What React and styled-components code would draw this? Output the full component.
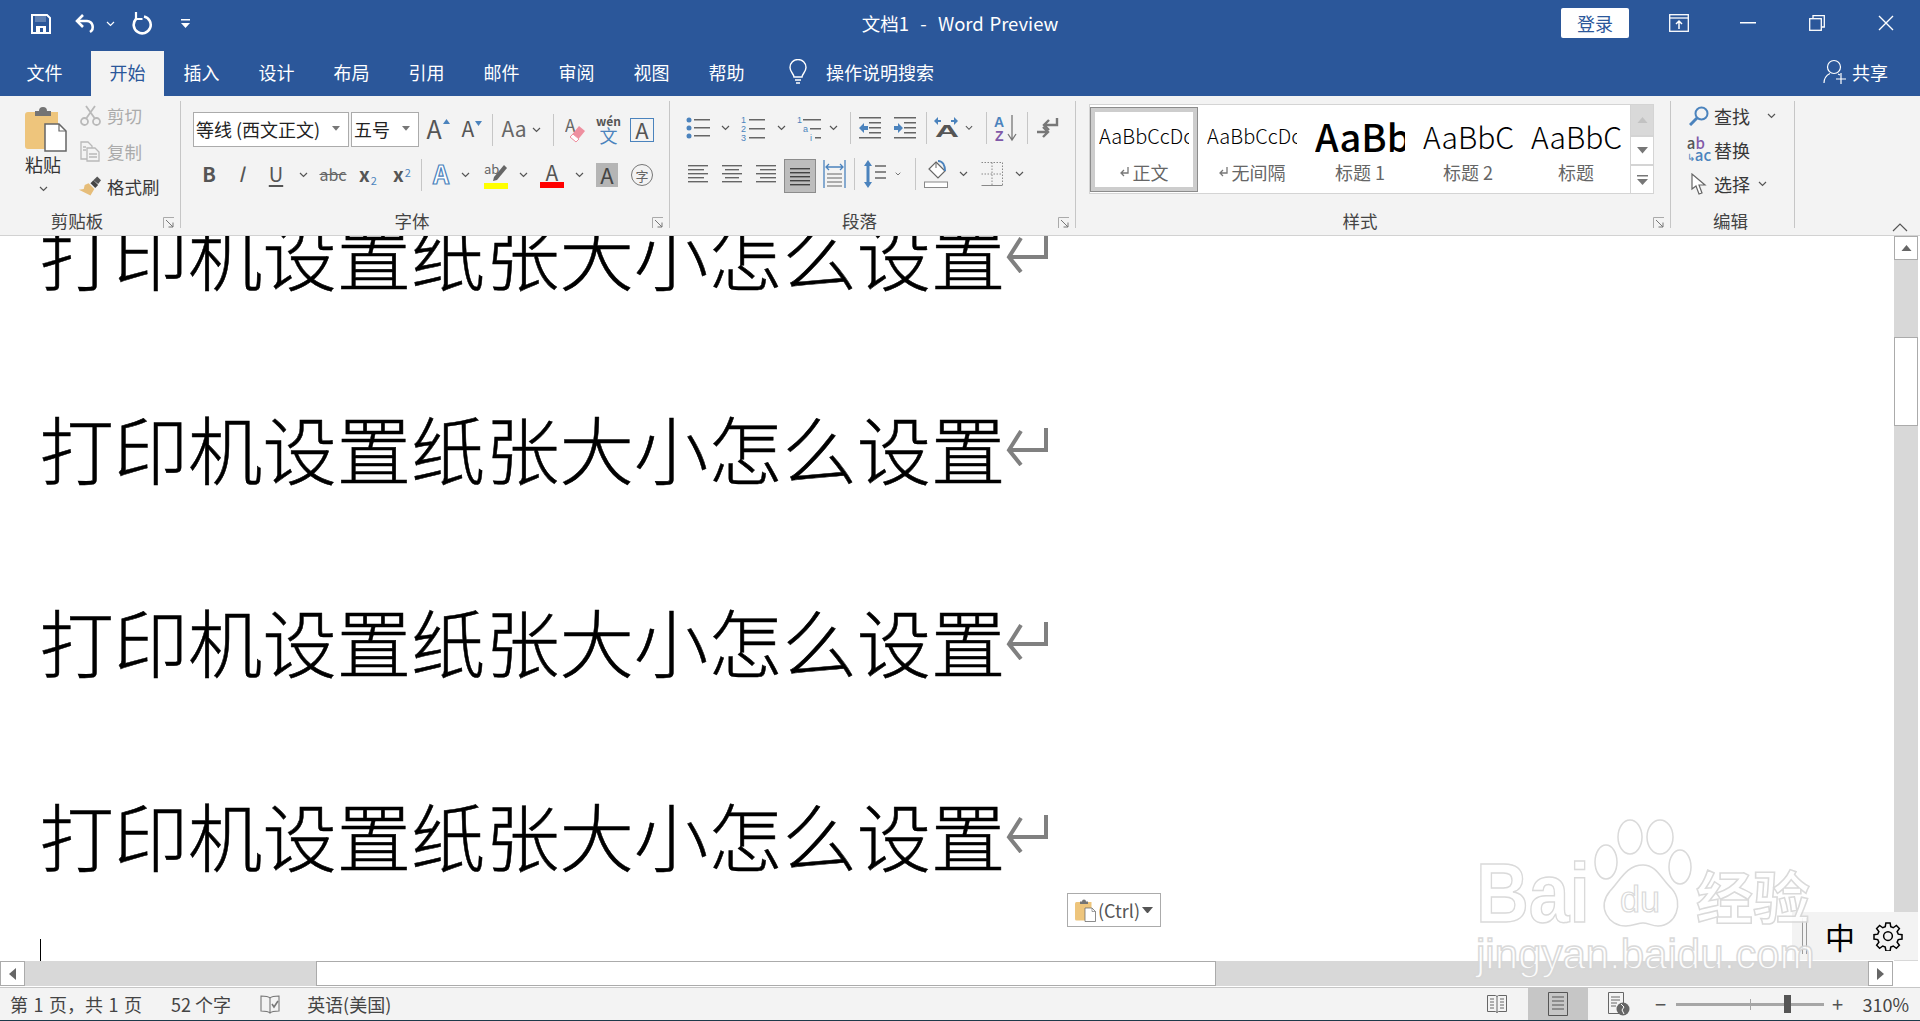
import React from 'react';
import styled, {createGlobalStyle} from 'styled-components';

const GlobalStyle = createGlobalStyle`
    html, body {
        margin: 0;
        padding: 0;
        background: #fff;
        font-family: "Noto Sans CJK SC", "Noto Sans", sans-serif;
    }
`;

const Window = styled.div`
    position: relative;
    display: flex;
    flex-direction: column;
    width: 1920px;
    height: 1021px;
    overflow: hidden;
    border-bottom: 1px solid #1d3a4a;
    box-sizing: border-box;
`;

/* ---------- title bar and tabs ---------- */

const TitleBar = styled.div`
    display: grid;
    grid-template-columns: 1fr auto 1fr;
    align-items: start;
    height: 51px;
    flex: none;
    background: #2b579a;
    color: #fff;
`;

const Qat = styled.div`
    display: flex;
    align-items: center;
    height: 48px;
`;

const Title = styled.div`
    font-size: 18.5px;
    line-height: 46px;
    word-spacing: 1.5px;
    white-space: pre;
`;

const WindowControls = styled.div`
    display: flex;
    justify-content: flex-end;
    align-items: center;
    height: 46px;
`;

const Login = styled.div`
    display: flex;
    align-items: center;
    justify-content: center;
    width: 68px;
    height: 30px;
    margin-right: 15px;
    background: #fff;
    border-radius: 2px;
    color: #2b579a;
    font-size: 18px;
`;

const WinButton = styled.div`
    display: flex;
    align-items: center;
    justify-content: center;
    width: 69px;
    height: 46px;
`;

const TabBar = styled.div`
    display: flex;
    align-items: stretch;
    height: 45px;
    flex: none;
    background: #2b579a;
    color: #fff;
    font-size: 18px;
`;

const Tab = styled.div`
    display: flex;
    align-items: center;
    justify-content: center;
    width: ${p => p.$w || 75}px;
    flex: none;
    padding-bottom: 3px;
    box-sizing: border-box;
    background: ${p => p.$active ? '#f3f3f3' : 'transparent'};
    color: ${p => p.$active ? '#2b579a' : '#fff'};
`;

const TellMe = styled.div`
    display: flex;
    align-items: center;
    gap: 18px;
    margin-left: 24px;
    padding-bottom: 3px;
`;

const Share = styled.div`
    display: flex;
    align-items: center;
    gap: 5px;
    margin-left: auto;
    padding-right: 32px;
    padding-bottom: 3px;
`;

/* ---------- ribbon ---------- */

const Ribbon = styled.div`
    display: flex;
    height: 140px;
    flex: none;
    box-sizing: border-box;
    padding-top: 5px;
    background: #f3f3f3;
    border-bottom: 1px solid #d2d2d2;
    color: #444;
`;

const Group = styled.div`
    display: flex;
    flex-direction: column;
    width: ${p => p.$w}px;
    height: 127px;
    flex: none;
    box-sizing: content-box;
    border-right: 1px solid #c6c6c6;
`;

const GroupBody = styled.div`
    flex: 1;
    min-height: 0;
    padding-left: ${p => p.$pl || 0}px;
    padding-top: ${p => p.$pt || 0}px;
`;

const GroupFoot = styled.div`
    display: flex;
    align-items: center;
    height: 18px;
    margin-bottom: -2px;
    font-size: 17.5px;
    color: #444;
`;

const GroupLabel = styled.div`
    flex: 1;
    text-align: center;
    padding-right: 4px;
    line-height: 18px;
`;

const Launcher = styled.div`
    display: flex;
    justify-content: center;
    width: 22px;
    padding-top: 3px;
    flex: none;
`;

const ClipboardBody = styled.div`
    display: flex;
    flex: 1;
    min-height: 0;
`;

const PasteColumn = styled.div`
    display: flex;
    flex-direction: column;
    align-items: center;
    width: 70px;
    margin-left: 8px;
    padding-top: 5px;
    font-size: 18px;
    color: #333;
    line-height: 24px;
`;

const PasteArt = styled.span`
    display: flex;
    margin-left: 5px;
`;

const PasteChevron = styled.span`
    display: flex;
    margin-top: 10px;
`;

const SmallList = styled.div`
    display: flex;
    flex-direction: column;
    gap: 3.5px;
`;

const SmallRow = styled.div`
    display: flex;
    align-items: center;
    gap: 5px;
    height: 32px;
    padding-bottom: 3px;
    box-sizing: border-box;
    font-size: 17.5px;
    color: ${p => p.$off ? '#ababab' : '#383838'};
`;

const IconBox = styled.span`
    display: flex;
    justify-content: center;
    align-items: center;
    width: ${p => p.$w || 24}px;
    flex: none;
`;

const Row = styled.div`
    display: flex;
    align-items: center;
    height: ${p => p.$h || 34}px;
    margin-bottom: ${p => p.$mb || 0}px;
`;

const Slot = styled.span`
    display: flex;
    justify-content: center;
    align-items: center;
    width: ${p => p.$w}px;
    margin-left: ${p => p.$ml || 0}px;
    height: 100%;
    flex: none;
`;

const Sep = styled.span`
    width: 1px;
    height: 32px;
    flex: none;
    margin-left: ${p => p.$ml || 0}px;
    background: #c6c6c6;
`;

const Combo = styled.div`
    display: flex;
    align-items: center;
    justify-content: space-between;
    width: ${p => p.$w}px;
    margin-right: ${p => p.$mr || 0}px;
    height: 35px;
    flex: none;
    box-sizing: border-box;
    padding: 0 8px 2px 2px;
    background: #fff;
    border: 1px solid #ababab;
    font-size: 18px;
    color: #222;
    white-space: nowrap;
`;

const Letter = styled.span`
    font-size: ${p => p.$s || 20}px;
    font-weight: ${p => p.$b ? 700 : 400};
    font-style: ${p => p.$i ? 'italic' : 'normal'};
    color: ${p => p.$c || '#555'};
    line-height: 1;
    margin-top: -3px;
    text-decoration: ${p => p.$u ? 'underline' : p.$strike ? 'line-through' : 'none'};
    text-underline-offset: 3px;
`;

const LetterSup = styled.span`
    display: inline-flex;
    align-items: ${p => p.$sub ? 'flex-end' : 'flex-start'};
    gap: 1px;
`;

const Tiny = styled.span`
    font-size: 11px;
    line-height: 1;
    color: #4b83bd;
    margin-bottom: ${p => p.$sub ? '-3px' : '0'};
`;

const OutlineLetter = styled.span`
    font-size: 25px;
    font-weight: 700;
    line-height: 1;
    margin-top: -3px;
    color: #fff;
    -webkit-text-stroke: 1.2px #4b83bd;
`;

const BoxLetter = styled.span`
    display: flex;
    align-items: center;
    justify-content: center;
    width: 24px;
    height: 24px;
    padding-bottom: 2px;
    box-sizing: border-box;
    border: 1px solid #4b83bd;
    font-size: 22px;
    line-height: 1;
    color: #555;
`;

const ShadedLetter = styled.span`
    display: flex;
    align-items: center;
    justify-content: center;
    width: 22px;
    height: 24px;
    padding-bottom: 2px;
    box-sizing: border-box;
    background: #b5b5b5;
    font-size: 22px;
    line-height: 1;
    color: #444;
`;

const CircleChar = styled.span`
    display: flex;
    align-items: center;
    justify-content: center;
    width: 22px;
    height: 22px;
    box-sizing: border-box;
    border: 1px solid #777;
    border-radius: 50%;
    font-size: 13px;
    color: #666;
`;

const BarLetter = styled.span`
    display: flex;
    flex-direction: column;
    align-items: center;
    width: 24px;
    line-height: 1;
    font-size: 21px;
    color: #555;

    &::after {
        content: '';
        width: 100%;
        height: 6px;
        margin-top: -1px;
        background: ${p => p.$bar};
    }
`;

const WenStack = styled.span`
    display: flex;
    flex-direction: column;
    align-items: center;
    line-height: 1;
`;

const WenTop = styled.span`
    font-size: 12px;
    font-weight: 700;
    color: #555;
    line-height: 11px;
`;

const WenBottom = styled.span`
    font-size: 18px;
    color: #4b83bd;
    line-height: 18px;
`;

const ActiveBox = styled.span`
    display: flex;
    justify-content: center;
    width: 32px;
    height: 34px;
    margin-left: 2px;
    margin-top: 4px;
    padding-top: 6px;
    flex: none;
    box-sizing: border-box;
    background: #bdbdbd;
    border: 1px solid #8c8c8c;
`;

/* styles gallery */

const Gallery = styled.div`
    display: flex;
    width: 565px;
    height: 90px;
    margin-left: 13px;
    margin-top: 3px;
`;

const StyleList = styled.div`
    display: flex;
    width: 542px;
    height: 90px;
    flex: none;
    box-sizing: border-box;
    border: 1px solid #d4d4d4;
    background: #fff;
    padding: 2px 0 1px;
`;

const StyleItem = styled.div`
    display: flex;
    flex-direction: column;
    align-items: center;
    width: 108px;
    flex: none;
    box-sizing: border-box;
    padding-top: ${p => p.$sel ? '0' : '5px'};
    border: ${p => p.$sel ? '5px solid #cdcdcd' : 'none'};
    outline: ${p => p.$sel ? '1px solid #8c8c8c' : 'none'};
    outline-offset: -1px;
`;

const StyleSample = styled.div`
    display: flex;
    align-items: center;
    width: 90px;
    height: 48px;
    flex: none;
    overflow: hidden;
    white-space: nowrap;
    font-size: ${p => p.$s}px;
    font-weight: ${p => p.$b ? 500 : 300};
    color: #000;
    line-height: 1;
`;

const StyleLabel = styled.div`
    display: flex;
    align-items: center;
    gap: 4px;
    height: 24px;
    font-size: 18px;
    color: #666;
`;

const GalleryArrows = styled.div`
    display: flex;
    flex-direction: column;
    width: 23px;
    flex: none;
`;

const GalleryArrow = styled.div`
    display: flex;
    align-items: center;
    justify-content: center;
    height: ${p => p.$h}px;
    box-sizing: border-box;
    background: ${p => p.$off ? '#d9d9d9' : '#fff'};
    border: 1px solid #d4d4d4;
    border-left: none;
`;

const EditList = styled.div`
    display: flex;
    flex-direction: column;
    gap: 4px;
    padding-left: 14px;
`;

const EditRow = styled.div`
    display: flex;
    align-items: center;
    height: 30px;
    gap: 1px;
    font-size: 18px;
    color: #383838;
`;

const EditChevron = styled.span`
    display: flex;
    margin-left: ${p => p.$ml}px;
`;

const ReplaceMark = styled.span`
    display: flex;
    flex-direction: column;
    font-size: 15px;
    line-height: 12px;
    font-weight: 500;
    color: #555;
`;

const ReplaceCell = styled.span`
    color: ${p => p.$c};
    font-size: ${p => p.$s || 15}px;
`;

const RibbonEnd = styled.div`
    display: flex;
    flex: 1;
    align-items: flex-end;
    justify-content: flex-end;
    padding: 0 12px 3px 0;
`;

/* ---------- document ---------- */

const DocArea = styled.div`
    display: grid;
    grid-template-columns: 1fr 26px;
    grid-template-rows: 1fr;
    flex: 1;
    min-height: 0;
`;

const Paper = styled.div`
    overflow: hidden;
    background: #fff;
`;

const PaperScroll = styled.div`
    margin-top: -80px;
`;

const Line = styled.div`
    display: flex;
    align-items: center;
    height: 193.5px;
    padding-left: 39.5px;
    font-size: 74.3px;
    font-weight: 300;
    -webkit-text-stroke: 0.5px #000;
    color: #000;
    white-space: nowrap;
`;

const ReturnMark = styled.svg`
    margin-left: 0.5px;
    margin-top: 2px;
`;

const Caret = styled.div`
    width: 1px;
    height: 30px;
    margin: 9px 0 0 40px;
    background: #000;
`;

const VScroll = styled.div`
    display: flex;
    flex-direction: column;
    width: 24px;
    background: #d8d8d8;
`;

const ScrollButton = styled.div`
    display: flex;
    align-items: center;
    justify-content: center;
    width: ${p => p.$w || 24}px;
    height: ${p => p.$h || 24}px;
    flex: none;
    box-sizing: border-box;
    background: #fff;
    border: 1px solid #ababab;
`;

const VThumb = styled.div`
    height: 89px;
    margin-top: 77px;
    background: #fff;
    border: 1px solid #ababab;
    box-sizing: border-box;
`;

const HScrollRow = styled.div`
    display: flex;
    height: 26px;
    flex: none;
    background: #fff;
`;

const HTrack = styled.div`
    display: flex;
    width: 1893px;
    height: 25px;
    background: #d8d8d8;
`;

const HThumb = styled.div`
    width: 900px;
    margin-left: 291px;
    background: #fff;
    border: 1px solid #ababab;
    box-sizing: border-box;
`;

const HEnd = styled.div`
    margin-left: auto;
`;

/* ---------- status bar ---------- */

const StatusBar = styled.div`
    display: flex;
    align-items: center;
    height: 33px;
    flex: none;
    box-sizing: border-box;
    background: #f3f3f3;
    border-top: 1px solid #c6c6c6;
    font-size: 18px;
    color: #444;
    white-space: pre;
`;

const StatusItem = styled.span`
    margin-left: ${p => p.$ml}px;
    display: flex;
    align-items: center;
    word-spacing: ${p => p.$ws || 0}px;
`;

const StatusRight = styled.div`
    display: flex;
    align-items: center;
    align-self: stretch;
    margin-left: auto;
    padding-right: 11px;
`;

const ViewButton = styled.span`
    display: flex;
    align-items: center;
    justify-content: center;
    width: ${p => p.$w}px;
    margin-left: ${p => p.$ml || 0}px;
    align-self: stretch;
    background: ${p => p.$active ? '#c6c6c6' : 'transparent'};
`;

const ZoomSlider = styled.div`
    position: relative;
    width: 148px;
    height: 3px;
    margin-left: 9px;
    background: #a6a6a6;
`;

const ZoomTick = styled.span`
    position: absolute;
    left: 74px;
    top: -4px;
    width: 1px;
    height: 11px;
    background: #a6a6a6;
`;

const ZoomThumb = styled.span`
    position: absolute;
    left: 108px;
    top: -8px;
    width: 7px;
    height: 18px;
    background: #555;
`;

const ZoomSign = styled.span`
    display: flex;
    justify-content: center;
    width: 14px;
    margin-left: ${p => p.$ml}px;
    font-size: 20px;
    line-height: 1;
    color: #555;
`;

const ZoomValue = styled.span`
    margin-left: 18px;
`;

/* ---------- things over the page ---------- */

const PasteTag = styled.div`
    position: absolute;
    left: 1067px;
    top: 893px;
    display: flex;
    align-items: center;
    gap: 2px;
    width: 94px;
    height: 34px;
    padding-left: 7px;
    box-sizing: border-box;
    background: #fff;
    border: 1px solid #ababab;
    font-size: 18px;
    color: #555;
`;

const Ime = styled.div`
    position: absolute;
    left: 1792px;
    top: 912px;
    display: flex;
    align-items: center;
    width: 126px;
    height: 48px;
    background: #f3f3f3;
    font-size: 30px;
    color: #000;
`;

const ImeGrip = styled.span`
    width: 3px;
    height: 36px;
    margin: 0 18px 0 10px;
    border-left: 1px solid #999;
    border-right: 1px solid #999;
`;

const ImeGear = styled.span`
    display: flex;
    margin-left: 18px;
`;

const Watermark = styled.div`
    position: absolute;
    left: 1476px;
    top: 817px;
    width: 345px;
    pointer-events: none;
    color: #fff;
    -webkit-text-stroke: 1.5px #d6d6d6;
    opacity: 0.9;
`;

const MarkTop = styled.div`
    display: flex;
    align-items: flex-end;
    height: 110px;
`;

const MarkBai = styled.span`
    font-family: "Liberation Sans", sans-serif;
    font-size: 84px;
    font-weight: 700;
    line-height: 68px;
    width: 118px;
    flex: none;
    transform: scaleX(0.87);
    transform-origin: left center;
`;

const MarkJing = styled.span`
    font-size: 57px;
    font-weight: 700;
    line-height: 66px;
    white-space: nowrap;
    margin-left: 4px;
`;

const MarkUrl = styled.div`
    font-family: "Liberation Sans", sans-serif;
    font-size: 42px;
    line-height: 48px;
    margin-top: 4px;
    white-space: nowrap;
`;

/* ---------- icons ---------- */

const Chev = ({c = '#555'}) => (
    <svg width="9" height="6" viewBox="0 0 9 6"><path d="M1 1l3.500 3.500L8 1" fill="none" stroke={c} strokeWidth="1.200" /></svg>
);

const Tri = ({down, c = '#777', w = 11}) => (
    <svg width={w} height={w * 0.6} viewBox="0 0 11 6.600"><path d={down ? 'M0 0h11L5.500 6.600z' : 'M0 6.600h11L5.500 0z'} fill={c} /></svg>
);

const Corner = () => (
    <svg width="12" height="12" viewBox="0 0 12 12" fill="none" stroke="#777"><path d="M.5 11V.5H11" stroke="#aaa" /><path d="M3 3l7 7M10 5.500V10H5.500" /></svg>
);

const Lines = ({rows, w = 24, h = 22, c = '#666'}) => (
    <svg width={w} height={h} viewBox={`0 0 ${w} ${h}`}>
        {rows.map(([x1, x2, y], i) => <rect key={i} x={x1} y={y} width={x2 - x1} height="1.400" fill={c} />)}
    </svg>
);

const Save = () => (
    <svg width="20" height="20" viewBox="0 0 20 20"><path d="M1 1h15l3 3v15H1z" fill="none" stroke="#fff" strokeWidth="2" /><path d="M5 12h10v7H5z" fill="#fff" /><path d="M9 14h3v4H9z" fill="#2b579a" /><path d="M4 2h11v6H4z" fill="#fff" opacity=".25" /></svg>
);

const Undo = () => (
    <svg width="22" height="22" viewBox="0 0 22 22" fill="none" stroke="#fff" strokeWidth="2.600"><path d="M9 2L3 8l6 6" /><path d="M3 8h10a6 6 0 0 1 3 11" /></svg>
);

const Redo = () => (
    <svg width="22" height="24" viewBox="0 0 22 24" fill="none" stroke="#fff" strokeWidth="2.600"><path d="M13 4.500a8.500 8.500 0 1 1-8 2.500" /><path d="M5 0v7h6.500" strokeWidth="2.200" /></svg>
);

const QatMore = () => (
    <svg width="9" height="10" viewBox="0 0 9 10"><rect width="9" height="1.500" fill="#fff" /><path d="M0 4h9L4.500 9z" fill="#fff" /></svg>
);

const Bulb = () => (
    <svg width="20" height="26" viewBox="0 0 20 26" fill="none" stroke="#fff" strokeWidth="1.400"><path d="M6 18c0-3-4-5-4-9.500a8 8 0 0 1 16 0C18 13 14 15 14 18z" /><path d="M7 21h6M8 24h4" /></svg>
);

const ShareIcon = () => (
    <svg width="24" height="26" viewBox="0 0 24 26" fill="none" stroke="#fff" strokeWidth="1.200"><circle cx="11" cy="8" r="6.500" /><path d="M1 24c0-5 3-8 6-9.500M15 15l2 1M18 14v11M13 20h10" /></svg>
);

const RibbonMode = () => (
    <svg width="20" height="18" viewBox="0 0 20 18" fill="none" stroke="#fff" strokeWidth="1.300"><rect x=".7" y=".7" width="18.600" height="16.600" /><path d="M1 4h18" /><path d="M10 15V7M7 10l3-3 3 3" strokeWidth="1.500" /></svg>
);

const Restore = () => (
    <svg width="16" height="16" viewBox="0 0 16 16" fill="none" stroke="#fff" strokeWidth="1.300"><rect x=".7" y="3.700" width="11.600" height="11.600" /><path d="M4 3V.7h11.300V12H13" /></svg>
);

const Close = () => (
    <svg width="16" height="16" viewBox="0 0 16 16" stroke="#fff" strokeWidth="1.400"><path d="M1 1l14 14M15 1L1 15" /></svg>
);

const PasteIcon = ({s = 1}) => (
    <svg width={42 * s} height={46 * s} viewBox="0 0 42 46">
        <path d="M3 6h30v37H3a3 3 0 0 1-3-3V9a3 3 0 0 1 3-3z" fill="#eec57c" />
        <path d="M10 5h4a4 4 0 0 1 8 0h4v5H10z" fill="#747474" />
        <path d="M20 18h14l7 7v20H20z" fill="#fff" stroke="#666" strokeWidth="1.500" />
        <path d="M34 18v7h7" fill="none" stroke="#666" strokeWidth="1.200" />
    </svg>
);

const Scissors = () => (
    <svg width="21" height="21" viewBox="0 0 21 21" fill="none" stroke="#b9b9b9" strokeWidth="1.800"><circle cx="4.500" cy="16.500" r="3.500" /><circle cx="16.500" cy="16.500" r="3.500" /><path d="M6.500 13L15 1M14.500 13L6 1" /></svg>
);

const CopyIcon = () => (
    <svg width="20" height="21" viewBox="0 0 20 21" fill="#f3f3f3" stroke="#b9b9b9" strokeWidth="1.300"><path d="M1 1h7l4 4v13H1z" /><path d="M7 7h8l4 4v9H7z" /><path d="M9 13h8M9 16h8M3 6h3M3 9h3" /></svg>
);

const Brush = () => (
    <svg width="25" height="21" viewBox="0 0 25 21"><path d="M11 7l6 6-4 7-12-6 5-1 1-4z" fill="#e6bd79" /><path d="M16 4l5 5-3 3-5-5z" fill="#444" /><path d="M20 0l4 4-3 4-5-4z" fill="#555" /></svg>
);

const GrowA = ({s, down}) => (
    <LetterSup>
        <Letter $s={s} $c="#555">A</Letter>
        <svg width="7" height="5" viewBox="0 0 7 5"><path d={down ? 'M0 0h7L3.500 5z' : 'M0 5h7L3.500 0z'} fill="#4b83bd" /></svg>
    </LetterSup>
);

const ClearFormat = () => (
    <svg width="22" height="26" viewBox="0 0 22 26">
        <text x="0" y="15" fontSize="17" fill="#666" fontFamily="Noto Sans CJK SC">A</text>
        <path d="M14 9l6 5-9 11-6-5z" fill="#ee8f9f" />
        <path d="M8 17l6 5-3 3-6-5z" fill="#fff" stroke="#ee8f9f" />
    </svg>
);

const Highlight = () => (
    <svg width="24" height="27" viewBox="0 0 24 27">
        <text x="0" y="12" fontSize="13" fill="#666" fontFamily="Noto Sans CJK SC">ab</text>
        <path d="M20 3l3 3-10 12-4 1 1-4z" fill="#666" />
        <rect y="21" width="24" height="6" fill="#ffff00" />
    </svg>
);

const Bullets = () => (
    <svg width="24" height="24" viewBox="0 0 24 24">
        {[4, 12, 20].map(y => <g key={y}><circle cx="3" cy={y} r="2.500" fill="#4b83bd" /><rect x="8" y={y - 1} width="16" height="1.500" fill="#666" /></g>)}
    </svg>
);

const Numbered = () => (
    <svg width="24" height="26" viewBox="0 0 24 26">
        {['1', '2', '3'].map((n, i) => <g key={n}><text x="0" y={8 + i * 9} fontSize="9" fill="#4b83bd" fontFamily="Liberation Sans">{n}</text><rect x="8" y={4 + i * 9} width="16" height="1.500" fill="#666" /></g>)}
    </svg>
);

const MultiLevel = () => (
    <svg width="24" height="26" viewBox="0 0 24 26">
        <text x="0" y="8" fontSize="9" fill="#4b83bd" fontFamily="Liberation Sans">1</text>
        <text x="6" y="17" fontSize="9" fill="#4b83bd" fontFamily="Liberation Sans">a</text>
        <text x="13" y="26" fontSize="9" fill="#4b83bd" fontFamily="Liberation Sans">i</text>
        <path d="M6 4h18v1.500H6zM13 13h11v1.500H13zM18 22h6v1.500h-6z" fill="#666" />
    </svg>
);

const Indent = ({out}) => (
    <svg width="24" height="24" viewBox="0 0 24 24">
        <path d="M1 1h22v1.500H1zM11 6h12v1.500H11zM11 11h12v1.500H11zM11 16h12v1.500H11zM1 21h22v1.500H1z" fill="#666" />
        <path d={out ? 'M1 12l5-5v3h4v4H6v3z' : 'M10 12L5 7v3H1v4h4v3z'} fill="#4b83bd" />
    </svg>
);

const TextDir = () => (
    <svg width="26" height="24" viewBox="0 0 26 24">
        <text x="1" y="21" fontSize="17" fontWeight="700" fill="#555" fontFamily="Liberation Sans" transform="scale(1.950 1)">A</text>
        <path d="M1 5l4-4v3h3v2H5v3zM25 5l-4-4v3h-3v2h3v3z" fill="#4b83bd" />
    </svg>
);

const Sort = () => (
    <svg width="26" height="28" viewBox="0 0 26 28">
        <text x="0" y="13" fontSize="14" fontWeight="700" fill="#4b83bd" fontFamily="Liberation Sans">A</text>
        <text x="1" y="27" fontSize="14" fontWeight="700" fill="#8059a8" fontFamily="Liberation Sans">Z</text>
        <path d="M18 1v24M14 20l4 6 4-6" fill="none" stroke="#777" strokeWidth="1.300" />
    </svg>
);

const Ltr = () => (
    <svg width="22" height="22" viewBox="0 0 22 22" fill="none" stroke="#777" strokeWidth="2.400"><path d="M20 1v7H8M12 3L7 8l5 5" /><path d="M0 15h10M6 10l5 5-5 5" /></svg>
);

const Distribute = () => (
    <svg width="23" height="28" viewBox="0 0 23 28">
        <path d="M1 0v28M22 0v28" stroke="#4b83bd" strokeWidth="1.300" />
        <path d="M3 7h17M6 4L3 7l3 3M17 4l3 3-3 3" stroke="#4b83bd" strokeWidth="1.300" fill="none" />
        <path d="M4 14h15M4 18h15M4 22h15M4 26h15" stroke="#666" strokeWidth="1.200" />
    </svg>
);

const LineSpacing = () => (
    <svg width="22" height="28" viewBox="0 0 22 28">
        <path d="M4 0l4 6H5.500v16H8l-4 6-4-6h2.500V6H0z" fill="#4b83bd" />
        <path d="M11 6h11M11 12h11M11 18h11" stroke="#666" strokeWidth="1.300" />
    </svg>
);

const Shading = () => (
    <svg width="24" height="28" viewBox="0 0 24 28">
        <path d="M12 2l9 9-7 7-9-9z" fill="#fff" stroke="#666" strokeWidth="1.200" />
        <path d="M12 2v6" stroke="#666" />
        <path d="M14 1c5 0 7 5 7 10" fill="none" stroke="#4b83bd" strokeWidth="2" />
        <rect x=".5" y="22" width="23" height="5.500" fill="#fff" stroke="#888" />
    </svg>
);

const Borders = () => (
    <svg width="22" height="24" viewBox="0 0 22 24" fill="none" stroke="#888"><path d="M.5.500h21v23H.5M11 .5v23M.5 12h21" strokeDasharray="1.500 1.500" /><path d="M.5 23.500h21" /></svg>
);

const Find = () => (
    <svg width="20" height="20" viewBox="0 0 20 20" fill="none" stroke="#4b83bd"><circle cx="12.500" cy="7.500" r="6" strokeWidth="2" /><path d="M8 12L1 19" strokeWidth="3" /></svg>
);

const SelectCursor = () => (
    <svg width="16" height="22" viewBox="0 0 16 22"><path d="M1 1v15l4-3 3 8 3-1-3-8h6z" fill="#fff" stroke="#666" strokeWidth="1.200" /></svg>
);

const ReturnSmall = () => (
    <svg width="9" height="10" viewBox="0 0 9 10" fill="none" stroke="#777" strokeWidth="1.300"><path d="M8 0v6H2M4 3L1 6l3 3" /></svg>
);

const ReturnBig = () => (
    <ReturnMark width="42" height="38" viewBox="0 0 42 38" fill="none" stroke="#808080" strokeWidth="4">
        <path d="M40 0v22H3" />
        <path d="M15 3L3 22l12 15" />
    </ReturnMark>
);

const ArrowLeft = () => (<svg width="7" height="12" viewBox="0 0 7 12"><path d="M7 0v12L0 6z" fill="#666" /></svg>);
const ArrowRight = () => (<svg width="7" height="12" viewBox="0 0 7 12"><path d="M0 0v12l7-6z" fill="#666" /></svg>);

const ProofIcon = () => (
    <svg width="20" height="19" viewBox="0 0 20 19" fill="none" stroke="#777" strokeWidth="1.100"><path d="M10 3c-2-2-5-2-9-2v15c4 0 7 0 9 2 2-2 5-2 9-2V1c-4 0-7 0-9 2zM10 3v15" /><path d="M12 9l2 3 4-6" strokeWidth="1.600" /></svg>
);

const ReadView = () => (
    <svg width="20" height="20" viewBox="0 0 20 20" fill="none" stroke="#666"><path d="M.5 1.500h8l1.500 1 1.500-1h8v16h-8L10 18.500l-1.500-1h-8zM10 2.500v16" /><path d="M3 5h4M3 8h4M3 11h4M3 14h4M13 5h4M13 8h4M13 11h4M13 14h4" /></svg>
);

const PrintView = () => (
    <svg width="20" height="24" viewBox="0 0 20 24" fill="none" stroke="#555"><path d="M.5.500h19v23H.5z" /><path d="M4 5h12M4 9h12M4 13h12M4 17h12" /></svg>
);

const WebView = () => (
    <svg width="22" height="24" viewBox="0 0 22 24"><path d="M.5.500h15v21H.5z" fill="#f3f3f3" stroke="#666" /><path d="M3 5h9M3 8h9M3 11h6M3 14h5" stroke="#666" /><circle cx="15" cy="17" r="6.500" fill="#666" /><path d="M13 12l3 3-2 3 2 4" stroke="#fff" fill="none" /></svg>
);

const Gear = () => (
    <svg width="30" height="30" viewBox="0 0 24 24" fill="none" stroke="#000" strokeWidth="1.200">
        <circle cx="12" cy="12" r="3.500" />
        <path d="M10.300 1.500h3.400l.5 3 2 .9 2.500-1.800 2.400 2.400-1.800 2.500.9 2 3 .5v3.400l-3 .5-.9 2 1.800 2.500-2.400 2.400-2.500-1.800-2 .9-.5 3h-3.400l-.5-3-2-.9-2.500 1.800-2.400-2.400 1.800-2.500-.9-2-3-.5v-3.400l3-.5.9-2-1.800-2.500 2.400-2.400 2.500 1.800 2-.9z" />
    </svg>
);

const Paw = () => (
    <svg width="98" height="108" viewBox="0 0 98 108" fill="#fff" stroke="#d6d6d6" strokeWidth="1.500" style={{flex: 'none'}}>
        <ellipse cx="12" cy="43" rx="11" ry="17" />
        <ellipse cx="36" cy="18" rx="12" ry="17" />
        <ellipse cx="66" cy="18" rx="13" ry="17" />
        <ellipse cx="86" cy="48" rx="11" ry="17" />
        <path d="M49 46c14 0 18 14 29 24 12 14 4 37-14 37-6 0-10-3-15-3s-10 3-17 3C14 107 3 88 16 72c10-10 16-26 33-26z" />
        <text x="26" y="93" fontSize="36" fontFamily="Liberation Sans" strokeWidth="1.200">du</text>
    </svg>
);

const LINE = '打印机设置纸张大小怎么设置';
const TABS = ['插入', '设计', '布局', '引用', '邮件', '审阅', '视图', '帮助'];
const STYLES = [
    {name: '正文', sample: 'AaBbCcDc', size: 20, sel: true, mark: true},
    {name: '无间隔', sample: 'AaBbCcDc', size: 20, mark: true},
    {name: '标题 1', sample: 'AaBbC', size: 38, bold: true},
    {name: '标题 2', sample: 'AaBbC', size: 30},
    {name: '标题', sample: 'AaBbC', size: 30}
];

const App = () => (
    <Window>
        <GlobalStyle />

        <TitleBar>
            <Qat>
                <Slot $w={31} $ml={25}><Save /></Slot>
                <Slot $w={46} $ml={6}><Undo /></Slot>
                <Slot $w={12} $ml={-4}><Chev c="#fff" /></Slot>
                <Slot $w={40} $ml={6}><Redo /></Slot>
                <Slot $w={20} $ml={13}><QatMore /></Slot>
            </Qat>
            <Title>{'文档1  -  Word Preview'}</Title>
            <WindowControls>
                <Login>登录</Login>
                <WinButton><RibbonMode /></WinButton>
                <WinButton><svg width="16" height="2"><rect width="16" height="1.500" fill="#fff" /></svg></WinButton>
                <WinButton><Restore /></WinButton>
                <WinButton><Close /></WinButton>
            </WindowControls>
        </TitleBar>

        <TabBar>
            <Tab $w={89}>文件</Tab>
            <Tab $w={2} />
            <Tab $w={73} $active>开始</Tab>
            {TABS.map(t => <Tab key={t}>{t}</Tab>)}
            <TellMe><Bulb />操作说明搜索</TellMe>
            <Share><ShareIcon />共享</Share>
        </TabBar>

        <Ribbon>
            <Group $w={180}>
                <ClipboardBody>
                    <PasteColumn>
                        <PasteArt><PasteIcon /></PasteArt>
                        粘贴
                        <PasteChevron><Chev /></PasteChevron>
                    </PasteColumn>
                    <SmallList>
                        <SmallRow $off><IconBox><Scissors /></IconBox>剪切</SmallRow>
                        <SmallRow $off><IconBox><CopyIcon /></IconBox>复制</SmallRow>
                        <SmallRow><IconBox><Brush /></IconBox>格式刷</SmallRow>
                    </SmallList>
                </ClipboardBody>
                <GroupFoot><GroupLabel>剪贴板</GroupLabel><Launcher><Corner /></Launcher></GroupFoot>
            </Group>

            <Group $w={488}>
                <GroupBody $pl={12} $pt={11}>
                    <Row $h={35} $mb={11}>
                        <Combo $w={156} $mr={2}>等线 (西文正文)<Tri down w={8} /></Combo>
                        <Combo $w={68}>五号<Tri down w={8} /></Combo>
                        <Slot $w={34} $ml={2}><GrowA s={25} /></Slot>
                        <Slot $w={34}><GrowA s={21} down /></Slot>
                        <Sep $ml={3} />
                        <Slot $w={28} $ml={7}><Letter $s={21} $c="#666">Aa</Letter></Slot>
                        <Slot $w={16}><Chev /></Slot>
                        <Sep $ml={9} />
                        <Slot $w={44}><ClearFormat /></Slot>
                        <Slot $w={21}><WenStack><WenTop>wén</WenTop><WenBottom>文</WenBottom></WenStack></Slot>
                        <Slot $w={24} $ml={11}><BoxLetter>A</BoxLetter></Slot>
                    </Row>
                    <Row>
                        <Slot $w={32}><Letter $s={20} $b $c="#555">B</Letter></Slot>
                        <Slot $w={32}><Letter $s={21} $i $c="#555">I</Letter></Slot>
                        <Slot $w={38}><Letter $s={20} $u $c="#555">U</Letter></Slot>
                        <Slot $w={16}><Chev /></Slot>
                        <Slot $w={44}><Letter $s={16} $strike $c="#666">abc</Letter></Slot>
                        <Slot $w={26}><LetterSup $sub><Letter $s={19} $b $c="#555">x</Letter><Tiny $sub>2</Tiny></LetterSup></Slot>
                        <Slot $w={34} $ml={4}><LetterSup><Letter $s={19} $b $c="#555">x</Letter><Tiny>2</Tiny></LetterSup></Slot>
                        <Sep $ml={2} />
                        <Slot $w={38}><OutlineLetter>A</OutlineLetter></Slot>
                        <Slot $w={10}><Chev /></Slot>
                        <Slot $w={28} $ml={12}><Highlight /></Slot>
                        <Slot $w={16} $ml={5}><Chev /></Slot>
                        <Slot $w={42}><BarLetter $bar="#ff0000">A</BarLetter></Slot>
                        <Slot $w={12}><Chev /></Slot>
                        <Slot $w={22} $ml={11}><ShadedLetter>A</ShadedLetter></Slot>
                        <Slot $w={28} $ml={10}><CircleChar>字</CircleChar></Slot>
                    </Row>
                </GroupBody>
                <GroupFoot><GroupLabel>字体</GroupLabel><Launcher><Corner /></Launcher></GroupFoot>
            </Group>

            <Group $w={405}>
                <GroupBody $pt={10}>
                    <Row $mb={12}>
                        <Slot $w={36} $ml={10}><Bullets /></Slot>
                        <Slot $w={18}><Chev /></Slot>
                        <Slot $w={38}><Numbered /></Slot>
                        <Slot $w={18}><Chev /></Slot>
                        <Slot $w={38}><MultiLevel /></Slot>
                        <Slot $w={10}><Chev /></Slot>
                        <Sep $ml={12} />
                        <Slot $w={38}><Indent out /></Slot>
                        <Slot $w={32}><Indent /></Slot>
                        <Sep $ml={5} />
                        <Slot $w={38}><TextDir /></Slot>
                        <Slot $w={8}><Chev /></Slot>
                        <Sep $ml={13} />
                        <Slot $w={40}><Sort /></Slot>
                        <Sep />
                        <Slot $w={40}><Ltr /></Slot>
                    </Row>
                    <Row>
                        <Slot $w={32} $ml={12}><Lines rows={[[2, 22, 2], [2, 18, 6], [2, 22, 10], [2, 18, 14], [2, 22, 18]]} /></Slot>
                        <Slot $w={36}><Lines rows={[[2, 22, 2], [5, 19, 6], [2, 22, 10], [5, 19, 14], [2, 22, 18]]} /></Slot>
                        <Slot $w={32}><Lines rows={[[2, 22, 2], [6, 22, 6], [2, 22, 10], [6, 22, 14], [2, 22, 18]]} /></Slot>
                        <ActiveBox><Lines c="#444" rows={[[2, 22, 2], [2, 22, 6], [2, 22, 10], [2, 22, 14], [2, 22, 18]]} /></ActiveBox>
                        <Slot $w={36}><Distribute /></Slot>
                        <Sep $ml={2} />
                        <Slot $w={40}><LineSpacing /></Slot>
                        <Slot $w={6}><Chev /></Slot>
                        <Sep $ml={14} />
                        <Slot $w={40}><Shading /></Slot>
                        <Slot $w={14}><Chev /></Slot>
                        <Slot $w={44}><Borders /></Slot>
                        <Slot $w={10}><Chev /></Slot>
                    </Row>
                </GroupBody>
                <GroupFoot><GroupLabel>段落</GroupLabel><Launcher><Corner /></Launcher></GroupFoot>
            </Group>

            <Group $w={594}>
                <GroupBody>
                    <Gallery>
                        <StyleList>
                            {STYLES.map(s => (
                                <StyleItem key={s.name} $sel={s.sel}>
                                    <StyleSample $s={s.size} $b={s.bold}>{s.sample}</StyleSample>
                                    <StyleLabel>{s.mark && <ReturnSmall />}{s.name}</StyleLabel>
                                </StyleItem>
                            ))}
                        </StyleList>
                        <GalleryArrows>
                            <GalleryArrow $h={32} $off><Tri c="#c2c2c2" /></GalleryArrow>
                            <GalleryArrow $h={29}><Tri down /></GalleryArrow>
                            <GalleryArrow $h={29}>
                                <svg width="11" height="10" viewBox="0 0 11 10"><rect width="11" height="1.500" fill="#777" /><path d="M0 4h11L5.500 10z" fill="#777" /></svg>
                            </GalleryArrow>
                        </GalleryArrows>
                    </Gallery>
                </GroupBody>
                <GroupFoot><GroupLabel>样式</GroupLabel><Launcher><Corner /></Launcher></GroupFoot>
            </Group>

            <Group $w={123}>
                <GroupBody>
                    <EditList>
                        <EditRow><IconBox $w={28}><Find /></IconBox>查找<EditChevron $ml={16}><Chev /></EditChevron></EditRow>
                        <EditRow>
                            <IconBox $w={28}>
                                <ReplaceMark>
                                    <span><ReplaceCell $c="#555">a</ReplaceCell><ReplaceCell $c="#8059a8">b</ReplaceCell></span>
                                    <span><ReplaceCell $c="#4b83bd" $s={10}>↳</ReplaceCell><ReplaceCell $c="#4b83bd">ac</ReplaceCell></span>
                                </ReplaceMark>
                            </IconBox>
                            替换
                        </EditRow>
                        <EditRow><IconBox $w={28}><SelectCursor /></IconBox>选择<EditChevron $ml={7}><Chev /></EditChevron></EditRow>
                    </EditList>
                </GroupBody>
                <GroupFoot><GroupLabel>编辑</GroupLabel></GroupFoot>
            </Group>

            <RibbonEnd>
                <svg width="16" height="9" viewBox="0 0 16 9"><path d="M1 8l7-7 7 7" fill="none" stroke="#555" strokeWidth="1.200" /></svg>
            </RibbonEnd>
        </Ribbon>

        <DocArea>
            <Paper>
                <PaperScroll>
                    {[0, 1, 2, 3].map(i => <Line key={i}>{LINE}<ReturnBig /></Line>)}
                    <Caret />
                </PaperScroll>
            </Paper>
            <VScroll>
                <ScrollButton><Tri c="#666" /></ScrollButton>
                <VThumb />
            </VScroll>
        </DocArea>

        <HScrollRow>
            <HTrack>
                <ScrollButton $w={25} $h={25}><ArrowLeft /></ScrollButton>
                <HThumb />
                <HEnd><ScrollButton $w={25} $h={25}><ArrowRight /></ScrollButton></HEnd>
            </HTrack>
        </HScrollRow>

        <StatusBar>
            <StatusItem $ml={10} $ws={1.5}>第 1 页，共 1 页</StatusItem>
            <StatusItem $ml={29}>52 个字</StatusItem>
            <StatusItem $ml={29}><ProofIcon /></StatusItem>
            <StatusItem $ml={27}>英语(美国)</StatusItem>
            <StatusRight>
                <ViewButton $w={20}><ReadView /></ViewButton>
                <ViewButton $w={60} $ml={21} $active><PrintView /></ViewButton>
                <ViewButton $w={22} $ml={20}><WebView /></ViewButton>
                <ZoomSign $ml={23}>−</ZoomSign>
                <ZoomSlider><ZoomTick /><ZoomThumb /></ZoomSlider>
                <ZoomSign $ml={6}>+</ZoomSign>
                <ZoomValue>310%</ZoomValue>
            </StatusRight>
        </StatusBar>

        <PasteTag>
            <PasteIcon s={0.5} />
            (Ctrl)
            <Tri down c="#555" />
        </PasteTag>

        <Ime>
            <ImeGrip />
            中
            <ImeGear><Gear /></ImeGear>
        </Ime>

        <Watermark>
            <MarkTop>
                <MarkBai>Bai</MarkBai>
                <Paw />
                <MarkJing>经验</MarkJing>
            </MarkTop>
            <MarkUrl>jingyan.baidu.com</MarkUrl>
        </Watermark>
    </Window>
);

export default App;
